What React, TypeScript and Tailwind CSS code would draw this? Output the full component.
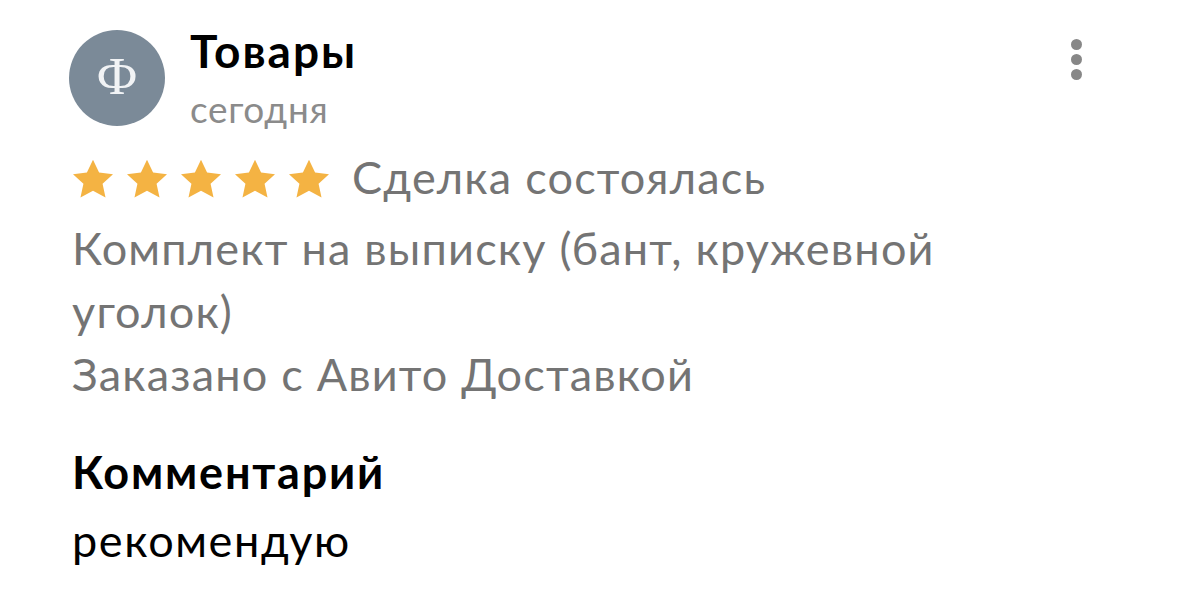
import React from 'react';

const Star: React.FC = () => (
  <svg width="42" height="40" viewBox="0 0 24 23" className="shrink-0">
    <path d="M12 0.4l3.5 7.4 8 0.9-6 5.5 1.7 8L12 18.2 4.8 22.2l1.7-8-6-5.5 8-0.9z" fill="#f4b343" />
  </svg>
);

const App: React.FC = () => {
  return (
    <div className="w-[1179px] h-[615px] bg-white overflow-hidden relative" style={{ fontFamily: 'Lato, "Noto Sans", sans-serif' }}>
      <div className="pl-[72px] pt-[23px]">
        {/* Header */}
        <div className="flex items-start">
          <div className="w-[96px] h-[96px] mt-[7px] -ml-[3px] rounded-full bg-[#7b8a98] flex items-center justify-center shrink-0">
            <span className="text-[52px] leading-none text-[#f1f3f5] -mt-[2px]" style={{ fontFamily: '"Liberation Serif", serif' }}>Ф</span>
          </div>
          <div className="ml-[25px] flex flex-col">
            <span className="text-[46px] leading-[56px] font-bold tracking-[2px] text-black">Товары</span>
            <span className="text-[37px] leading-[56px] mt-[2px] tracking-[0.7px] text-[#8b8b8b]">сегодня</span>
          </div>
        </div>

        {/* Rating */}
        <div className="flex items-center mt-[10px] h-[61px]">
          <div className="flex gap-[12px] mt-[2px]">
            <Star />
            <Star />
            <Star />
            <Star />
            <Star />
          </div>
          <span className="ml-[22px] text-[45px] leading-[61px] tracking-[1.2px] text-[#747474]">Сделка состоялась</span>
        </div>

        <div className="mt-[9px] w-[950px] text-[45px] leading-[63px] tracking-[1.2px] text-[#747474]">
          <p>Комплект на выписку (бант, кружевной уголок)</p>
          <p>Заказано с Авито Доставкой</p>
        </div>

        <div className="mt-[35px] text-[45px] leading-[63px]">
          <p className="font-bold tracking-[1.8px] text-black">Комментарий</p>
          <p className="mt-[5px] tracking-[1.6px] text-black">рекомендую</p>
        </div>
      </div>

      {/* Menu dots */}
      <button className="absolute top-[39px] left-[1071px] flex flex-col gap-[4px]">
        <span className="w-[11px] h-[11px] rounded-full bg-[#878787]" />
        <span className="w-[11px] h-[11px] rounded-full bg-[#878787]" />
        <span className="w-[11px] h-[11px] rounded-full bg-[#878787]" />
      </button>
    </div>
  );
};

export default App;
